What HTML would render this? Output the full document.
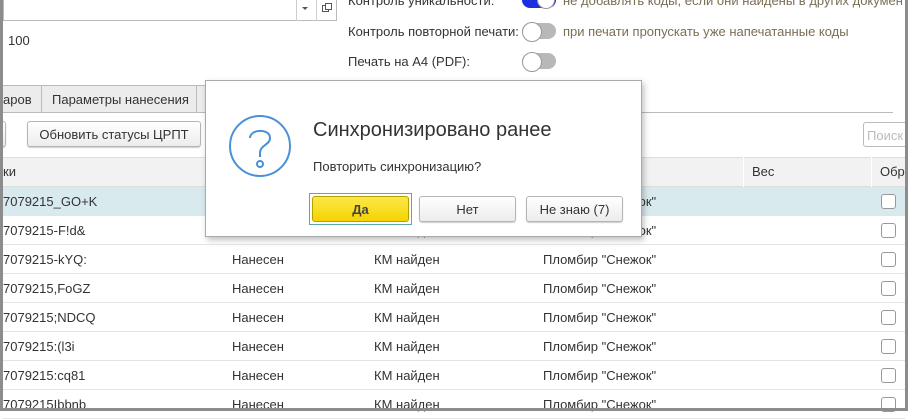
<!DOCTYPE html>
<html><head><meta charset="utf-8"><style>
*{box-sizing:border-box;margin:0;padding:0}
body{width:908px;height:411px;overflow:hidden;background:#fff;font-family:"Liberation Sans",Arial,sans-serif;font-size:13px;color:#333;position:relative;white-space:nowrap}
.a{position:absolute}
.frame{left:0;top:0;width:908px;height:411px;border:3px solid #8c8c8c;border-top:none}
.tog{width:34px;height:16px;border-radius:8px;background:#b8b8b8}
.tog:before{content:"";position:absolute;left:0;top:-1px;width:18px;height:18px;border-radius:50%;background:#fff;border:1px solid #999}
.btn{border:1px solid #b5b5b5;border-radius:3px;background:linear-gradient(#fff,#ececec);box-shadow:0 1px 1px rgba(0,0,0,.2);text-align:center;color:#333;font-size:13px}
.row{left:3px;width:902px;height:29px;border-bottom:1px solid #e4e4e4}
.row span{position:absolute;top:7px}
.cb{position:absolute;left:881px;top:7px;width:15px;height:15px;border:1px solid #999;border-radius:3px;background:#fff}
</style></head><body>
<div class="a" style="left:3px;top:0;width:334px;height:21px;border:1px solid #bbb;border-top:none;background:#fff"></div>
<div class="a" style="left:296px;top:0;width:1px;height:21px;background:#ccc"></div>
<div class="a" style="left:316px;top:0;width:1px;height:21px;background:#ccc"></div>
<div class="a" style="left:302px;top:7px;width:0;height:0;border-left:3px solid transparent;border-right:3px solid transparent;border-top:3px solid #555"></div>
<div class="a" style="left:322px;top:5px;width:7px;height:7px;border:1px solid #555;background:#fff"></div>
<div class="a" style="left:325px;top:3px;width:7px;height:7px;border:1px solid #555;background:#fff"></div>
<div class="a" style="left:8px;top:33px">100</div>
<div class="a" style="left:348px;top:-7px">Контроль уникальности:</div>
<div class="a" style="left:348px;top:24px">Контроль повторной печати:</div>
<div class="a" style="left:348px;top:54px">Печать на А4 (PDF):</div>
<div class="a" style="left:522px;top:-8px;width:34px;height:16px;border-radius:8px;background:#1a2fe0"></div>
<div class="a" style="left:537px;top:-9px;width:18px;height:18px;border-radius:50%;background:#fff;border:1px solid #999"></div>
<div class="a" style="left:563px;top:-7px;color:#7a6e55">не добавлять коды, если они найдены в других документах</div>
<div class="a tog" style="left:522px;top:23px"></div>
<div class="a" style="left:563px;top:24px;color:#7a6e55">при печати пропускать уже напечатанные коды</div>
<div class="a tog" style="left:522px;top:53px"></div>
<div class="a" style="left:3px;top:112px;width:890px;height:1px;background:#bbb"></div>
<div class="a" style="left:3px;top:85px;width:39px;height:28px;background:#ececec;border:1px solid #bbb;border-left:none;padding:6px 0 0 0">аров</div>
<div class="a" style="left:41px;top:85px;width:156px;height:28px;background:#ececec;border:1px solid #bbb;padding:6px 0 0 10px">Параметры нанесения</div>
<div class="a" style="left:196px;top:85px;width:20px;height:28px;background:#ececec;border:1px solid #bbb"></div>
<div class="a btn" style="left:-3px;top:121px;width:9px;height:26px"></div>
<div class="a btn" style="left:27px;top:121px;width:174px;height:26px;padding-top:5px">Обновить статусы ЦРПТ</div>
<div class="a" style="left:863px;top:122px;width:50px;height:25px;border:1px solid #bbb;border-radius:3px;color:#bbb;padding:5px 0 0 3px">Поиск</div>
<div class="a" style="left:3px;top:157px;width:902px;height:30px;background:#f2f2f2;border-top:1px solid #ddd;border-bottom:1px solid #ddd"></div>
<div class="a" style="left:743px;top:157px;width:1px;height:59px;background:#fff"></div>
<div class="a" style="left:871px;top:157px;width:1px;height:59px;background:#fff"></div>
<div class="a" style="left:3px;top:164px">ки</div>
<div class="a" style="left:752px;top:164px">Вес</div>
<div class="a" style="left:880px;top:164px">Обр</div>
<div class="a row" style="top:187px;background:#d9eaee"><span style="left:0">7079215_GO+K</span><span style="left:540px">Пломбир "Снежок"</span><div class="cb" style="left:878px"></div></div>
<div class="a row" style="top:216px"><span style="left:0">7079215-F!d&amp;</span><span style="left:229px">Нанесен</span><span style="left:371px">КМ найден</span><span style="left:540px">Пломбир "Снежок"</span><div class="cb" style="left:878px"></div></div>
<div class="a row" style="top:245px"><span style="left:0">7079215-kYQ:</span><span style="left:229px">Нанесен</span><span style="left:371px">КМ найден</span><span style="left:540px">Пломбир "Снежок"</span><div class="cb" style="left:878px"></div></div>
<div class="a row" style="top:274px"><span style="left:0">7079215,FoGZ</span><span style="left:229px">Нанесен</span><span style="left:371px">КМ найден</span><span style="left:540px">Пломбир "Снежок"</span><div class="cb" style="left:878px"></div></div>
<div class="a row" style="top:303px"><span style="left:0">7079215;NDCQ</span><span style="left:229px">Нанесен</span><span style="left:371px">КМ найден</span><span style="left:540px">Пломбир "Снежок"</span><div class="cb" style="left:878px"></div></div>
<div class="a row" style="top:332px"><span style="left:0">7079215:(l3i</span><span style="left:229px">Нанесен</span><span style="left:371px">КМ найден</span><span style="left:540px">Пломбир "Снежок"</span><div class="cb" style="left:878px"></div></div>
<div class="a row" style="top:361px"><span style="left:0">7079215:cq81</span><span style="left:229px">Нанесен</span><span style="left:371px">КМ найден</span><span style="left:540px">Пломбир "Снежок"</span><div class="cb" style="left:878px"></div></div>
<div class="a row" style="top:390px"><span style="left:0">7079215Ibbnb</span><span style="left:229px">Нанесен</span><span style="left:371px">КМ найден</span><span style="left:540px">Пломбир "Снежок"</span><div class="cb" style="left:878px"></div></div>
<div class="a" style="left:205px;top:80px;width:437px;height:157px;background:#fff;border:1px solid #aaa;box-shadow:2px 3px 6px rgba(0,0,0,.25)"></div>
<svg class="a" style="left:228px;top:115px" width="64" height="64" viewBox="0 0 64 64"><circle cx="32" cy="31" r="30" fill="none" stroke="#4a90d9" stroke-width="2"/><path d="M22 23 C22 14 42 13 42 23 C42 30 32 30 32 38 V42" fill="none" stroke="#4a90d9" stroke-width="2"/><circle cx="32" cy="49" r="3" fill="none" stroke="#4a90d9" stroke-width="2"/></svg>
<div class="a" style="left:313px;top:119px;font-size:20px;color:#333">Синхронизировано ранее</div>
<div class="a" style="left:313px;top:159px">Повторить синхронизацию?</div>
<div class="a" style="left:309px;top:193px;width:103px;height:32px;border:1px solid #5fa6a6"></div>
<div class="a" style="left:312px;top:196px;width:97px;height:26px;border:1px solid #b8a000;border-radius:3px;background:linear-gradient(#fbe84a,#f5d400);text-align:center;padding-top:5px;font-weight:bold;color:#444">Да</div>
<div class="a btn" style="left:419px;top:196px;width:97px;height:26px;padding-top:5px">Нет</div>
<div class="a btn" style="left:526px;top:196px;width:97px;height:26px;padding-top:5px">Не знаю (7)</div>
<div class="a frame"></div>
</body></html>
